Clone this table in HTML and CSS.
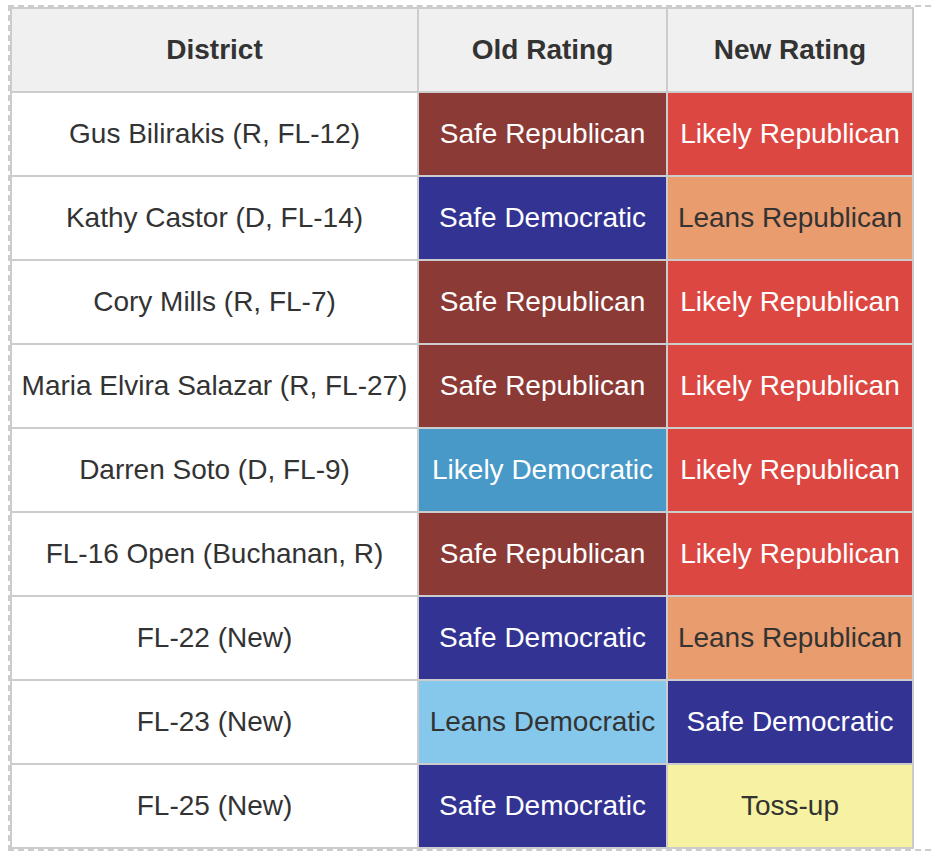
FILE: index.html
```html
<!DOCTYPE html>
<html lang="en">
<head>
<meta charset="utf-8">
<title>Florida House Ratings</title>
<link rel="stylesheet" href="styles.css">
</head>
<body>
<div class="frame">
  <table class="ratings">
    <colgroup>
      <col class="c-district">
      <col class="c-old">
      <col class="c-new">
    </colgroup>
    <thead>
      <tr><th>District</th><th>Old Rating</th><th>New Rating</th></tr>
    </thead>
    <tbody>
      <tr><td>Gus Bilirakis (R, FL-12)</td><td class="safe-r">Safe Republican</td><td class="likely-r">Likely Republican</td></tr>
      <tr><td>Kathy Castor (D, FL-14)</td><td class="safe-d">Safe Democratic</td><td class="leans-r">Leans Republican</td></tr>
      <tr><td>Cory Mills (R, FL-7)</td><td class="safe-r">Safe Republican</td><td class="likely-r">Likely Republican</td></tr>
      <tr><td>Maria Elvira Salazar (R, FL-27)</td><td class="safe-r">Safe Republican</td><td class="likely-r">Likely Republican</td></tr>
      <tr><td>Darren Soto (D, FL-9)</td><td class="likely-d">Likely Democratic</td><td class="likely-r">Likely Republican</td></tr>
      <tr><td>FL-16 Open (Buchanan, R)</td><td class="safe-r">Safe Republican</td><td class="likely-r">Likely Republican</td></tr>
      <tr><td>FL-22 (New)</td><td class="safe-d">Safe Democratic</td><td class="leans-r">Leans Republican</td></tr>
      <tr><td>FL-23 (New)</td><td class="leans-d">Leans Democratic</td><td class="safe-d">Safe Democratic</td></tr>
      <tr><td>FL-25 (New)</td><td class="safe-d">Safe Democratic</td><td class="tossup">Toss-up</td></tr>
    </tbody>
  </table>
</div>
</body>
</html>
```

FILE: styles.css
```css
html, body {
  background: #ffffff;
}
body {
  margin: 5px 0 0 8px;
  font-family: "Liberation Sans", Arial, Helvetica, sans-serif;
  color: #333333;
}
.frame {
  border: 2px dashed #cccccc;
  border-right: none;
}
.ratings {
  border-collapse: collapse;
  table-layout: fixed;
  width: 902px;
  font-size: 28px;
  line-height: 32px;
}
.c-district { width: 407px; }
.c-old { width: 249px; }
.c-new { width: 246px; }
.ratings th,
.ratings td {
  border: 2px solid #cccccc;
  text-align: center;
  white-space: nowrap;
  overflow: hidden;
}
.ratings th {
  background: #f0f0f0;
  font-weight: bold;
  padding: 25px 0;
}
.ratings td {
  padding: 25px 0;
}
.safe-r { background: #8b3a36; color: #ffffff; }
.likely-r { background: #dc4742; color: #ffffff; }
.safe-d { background: #333393; color: #ffffff; }
.leans-r { background: #e99c6d; color: #333333; }
.likely-d { background: #4899c8; color: #ffffff; }
.leans-d { background: #86c8ec; color: #333333; }
.tossup { background: #f6f2a2; color: #333333; }
```
